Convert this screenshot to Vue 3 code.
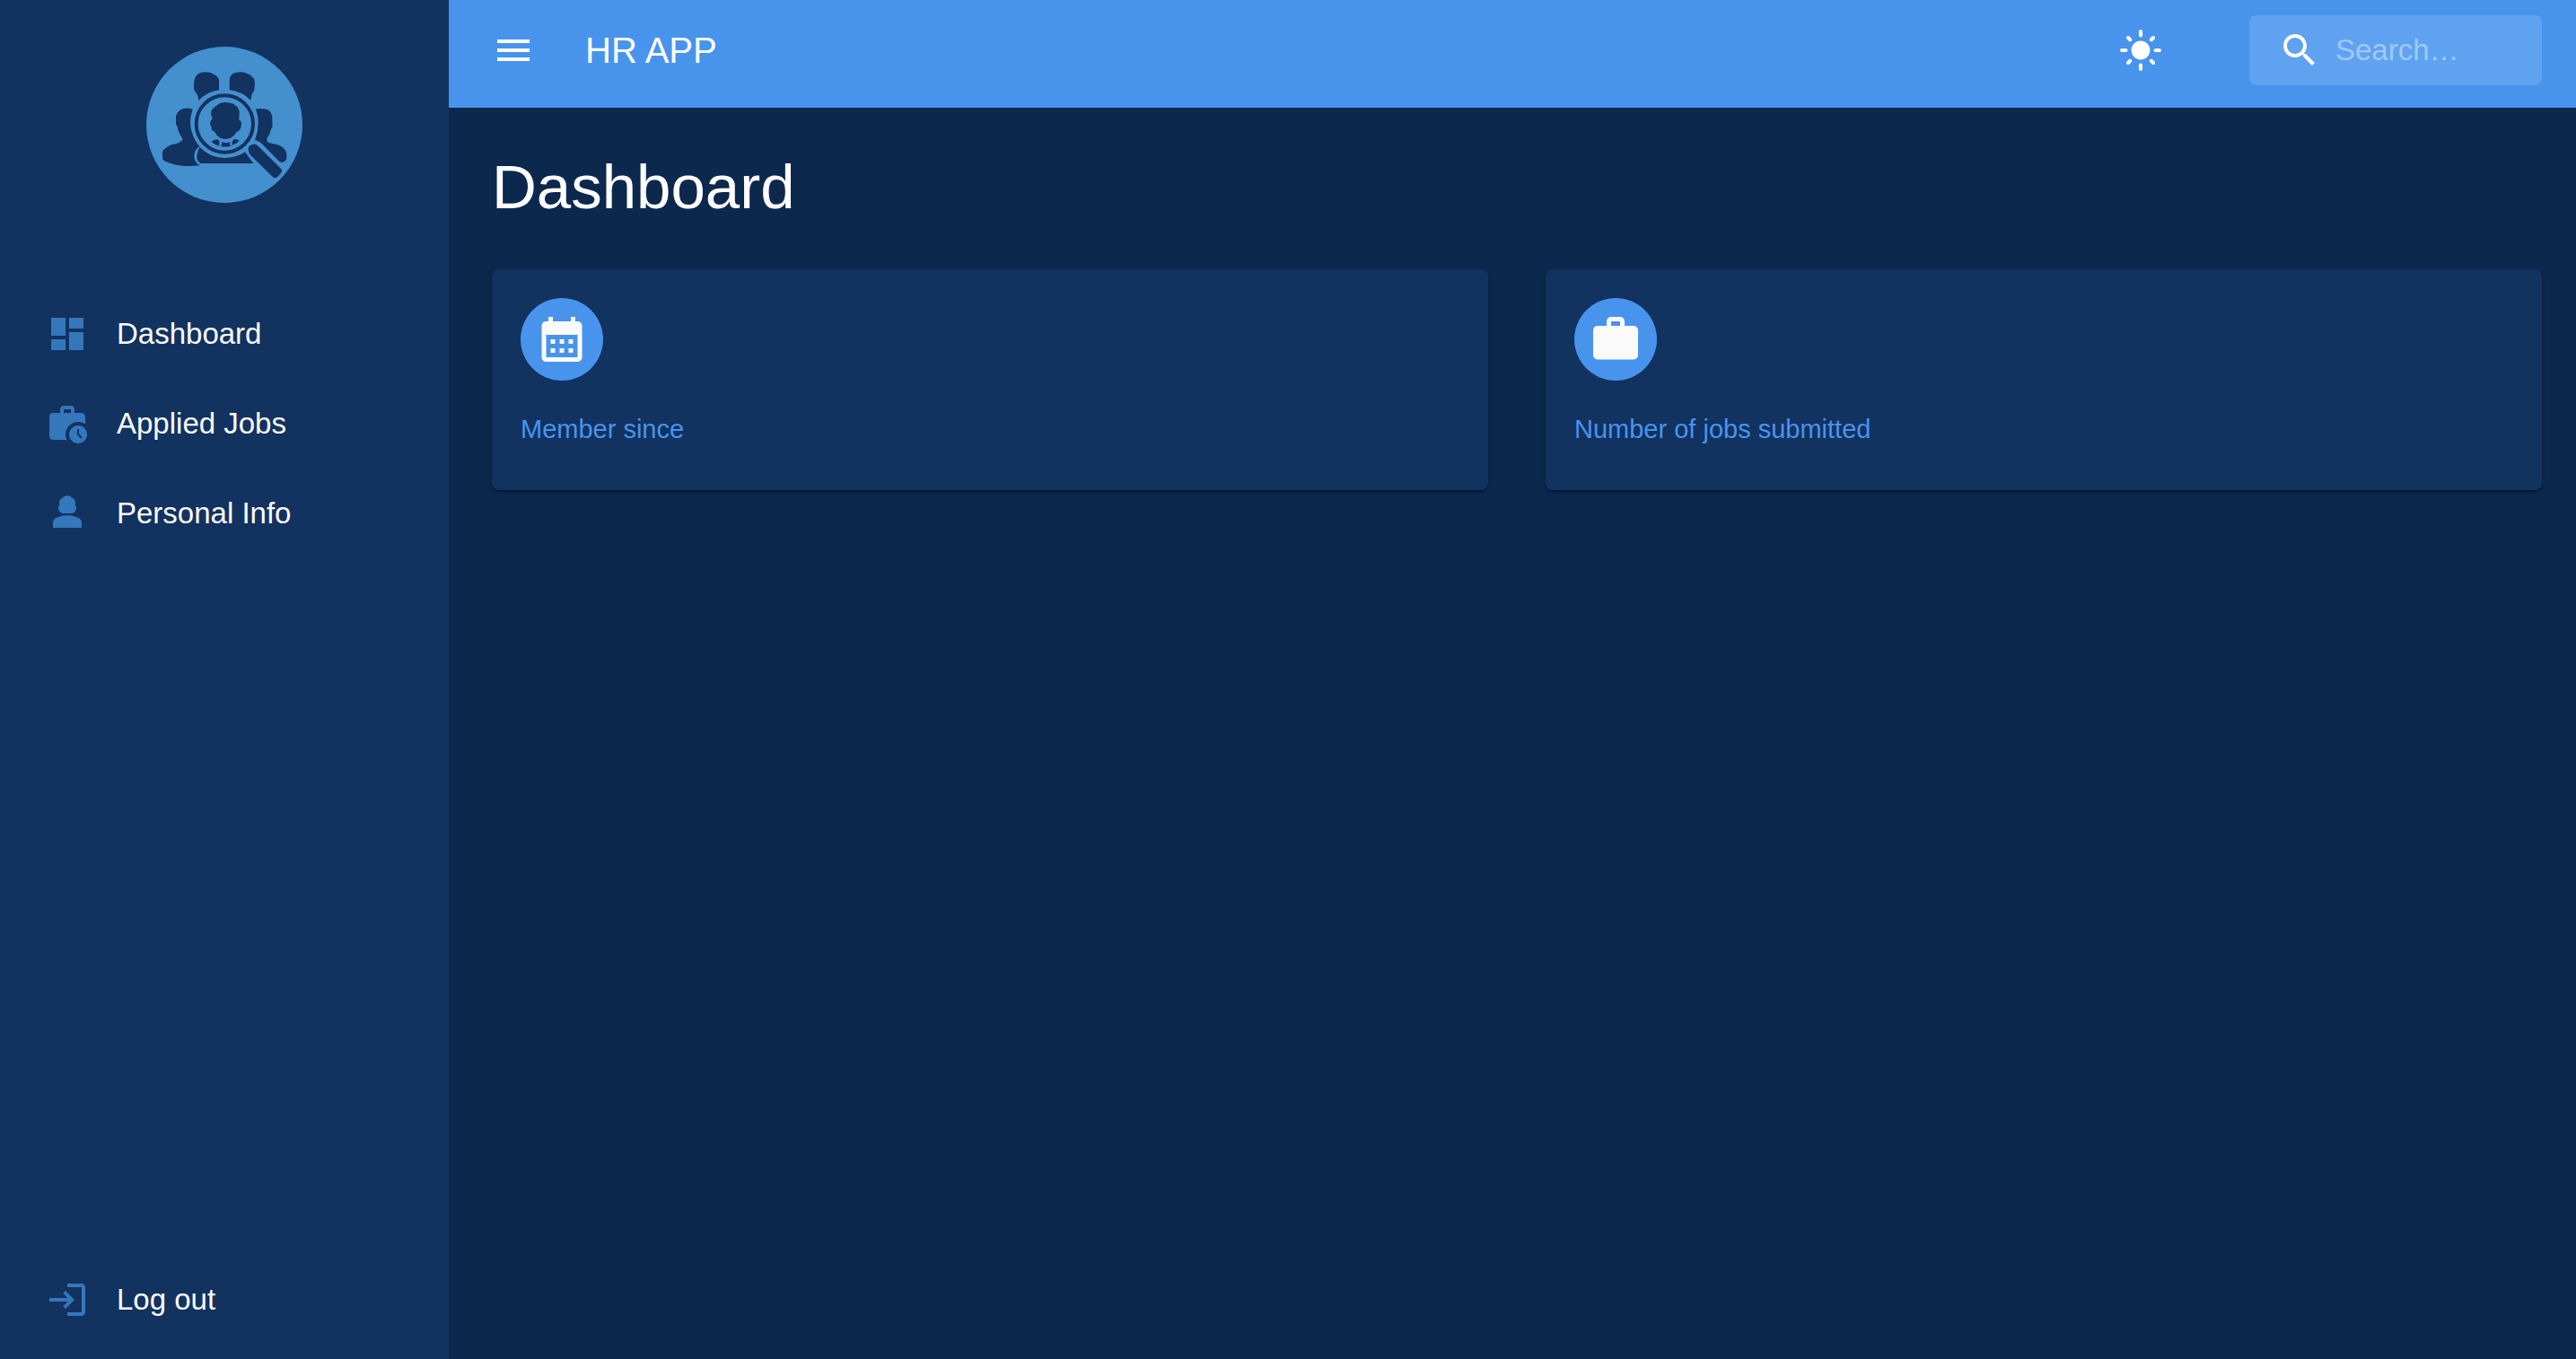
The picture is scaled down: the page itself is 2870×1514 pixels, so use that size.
<script setup>
import { ref } from 'vue'

const query = ref('')

const links = [
  {
    label: 'Dashboard',
    icon: 'M3 13h8V3H3v10zm0 8h8v-6H3v6zm10 0h8V11h-8v10zm0-18v6h8V3h-8z'
  },
  {
    label: 'Applied Jobs',
    icon: 'M18 11c1.49 0 2.87.47 4 1.26V8c0-1.11-.89-2-2-2h-4V4c0-1.11-.89-2-2-2h-4c-1.11 0-2 .89-2 2v2H4c-1.11 0-1.99.89-1.99 2L2 19c0 1.11.89 2 2 2h7.68A6.995 6.995 0 0 1 18 11zm-8-7h4v2h-4V4zM18 13c-2.76 0-5 2.24-5 5s2.24 5 5 5 5-2.24 5-5-2.24-5-5-5zm1.65 7.35L17.5 18.2V15h1v2.79l1.85 1.85-.7.71z'
  },
  {
    label: 'Personal Info',
    icon: 'M18.39 14.56C16.71 13.7 14.53 13 12 13s-4.71.7-6.39 1.56C4.61 15.07 4 16.1 4 17.22V20h16v-2.78c0-1.12-.61-2.15-1.61-2.66zM10 12h4c1.66 0 3-1.34 3-3 0-.73-.27-1.4-.71-1.92.13-.33.21-.7.21-1.08 0-1.25-.77-2.32-1.86-2.77C14 2.48 13.06 2 12 2s-2 .48-2.64 1.23C8.27 3.68 7.5 4.75 7.5 6c0 .38.08.75.21 1.08C7.27 7.6 7 8.27 7 9c0 1.66 1.34 3 3 3z'
  }
]

const cards = [
  {
    label: 'Member since',
    icon: 'M19 4h-1V2h-2v2H8V2H6v2H5c-1.11 0-1.99.9-1.99 2L3 20c0 1.1.89 2 2 2h14c1.1 0 2-.9 2-2V6c0-1.1-.9-2-2-2zm0 16H5V10h14v10zM9 14H7v-2h2v2zm4 0h-2v-2h2v2zm4 0h-2v-2h2v2zm-8 4H7v-2h2v2zm4 0h-2v-2h2v2zm4 0h-2v-2h2v2z'
  },
  {
    label: 'Number of jobs submitted',
    icon: 'M20 6h-4V4c0-1.11-.89-2-2-2h-4c-1.11 0-2 .89-2 2v2H4c-1.11 0-1.99.89-1.99 2L2 19c0 1.11.89 2 2 2h16c1.11 0 2-.89 2-2V8c0-1.11-.89-2-2-2zm-6 0h-4V4h4v2z'
  }
]
</script>

<template>
  <div class="app">
    <aside class="sidebar">
      <svg class="logo" viewBox="39 36 522 522" role="img" aria-label="HR">
        <circle class="logo-bg" cx="300" cy="297" r="261" />
        <g class="logo-fg">
          <path d="M214 216L211 200Q207 189 199 182L198 160Q200 139 207 132Q218 121 235 121Q254 121 263 128Q279 133 282 147V181Q240 187 214 216Z" />
          <path d="M317 181V147Q319 128 336 123Q358 118 374 125Q391 130 400 145L402 160L399 184Q392 190 390 203L388 215Q358 185 317 181Z" />
          <path d="M194 246Q179 287 192 324Q200 350 217 370Q199 380 199 404Q200 422 218 433Q160 440 118 425Q92 417 93 409V387Q102 372 124 363Q153 359 160 347Q160 339 153 332Q144 317 143 304L138 295V267Q145 249 162 243Q181 239 194 246Z" />
          <path d="M405 244Q418 242 430 244Q446 245 452 252Q461 263 460 278V292L461 302L456 312Q453 330 443 341Q439 351 448 357L465 361Q486 365 497 374Q508 384 508 394V409Q505 422 492 423Q486 422 480 416L425 360Q416 351 402 348Q423 294 405 244Z" />
          <path d="M218 372Q251 407 300 408Q343 407 369 388L397 426H222Q209 421 208 404Q210 382 218 372Z" />
          <path d="M285 225L300 222L313 223L330 227L343 237L350 251L349 279L357 289L356 303L351 316L341 321L333 332L319 342L303 345L287 342L276 334L268 321L258 315L256 302L252 294L253 285L258 280L260 272L255 263L257 248L267 238Z" />
          <path d="M256 354Q264 346 278 345L284 353Q281 361 284 368Q267 363 256 354ZM291 355Q305 359 320 355L317 361L321 369Q305 372 288 369L292 361ZM326 354L332 345Q345 346 350 350Q341 361 325 365Z" />
          <path d="M380 382Q377 368 393 363Q404 359 413 368L490 445Q495 451 489 458L477 472Q466 478 459 469L391 402Q381 393 380 382Z" />
        </g>
        <circle class="logo-lens" cx="301" cy="294" r="95" />
      </svg>

      <nav class="nav">
        <a v-for="link in links" :key="link.label" class="link" href="#">
          <svg class="icon" viewBox="0 0 24 24" aria-hidden="true"><path :d="link.icon" /></svg>
          <span>{{ link.label }}</span>
        </a>
      </nav>

      <button class="link logout" type="button">
        <svg class="icon" viewBox="0 0 24 24" aria-hidden="true">
          <path d="M11 7L9.600 8.400l2.600 2.600H2v2h10.200l-2.600 2.600L11 17l5-5-5-5zm9 12h-8v2h8c1.100 0 2-.9 2-2V5c0-1.100-.9-2-2-2h-8v2h8v14z" />
        </svg>
        <span>Log out</span>
      </button>
    </aside>

    <div class="page">
      <header class="topbar">
        <button class="icon-button" type="button" aria-label="Menu">
          <svg class="icon" viewBox="0 0 24 24"><path d="M3 18h18v-2H3v2zm0-5h18v-2H3v2zm0-7v2h18V6H3z" /></svg>
        </button>
        <span class="brand">HR APP</span>
        <button class="icon-button theme" type="button" aria-label="Light mode">
          <svg class="icon sun" viewBox="0 0 24 24">
            <path d="M12 7c-2.760 0-5 2.240-5 5s2.240 5 5 5 5-2.240 5-5-2.240-5-5-5zM2 13h2c.55 0 1-.45 1-1s-.45-1-1-1H2c-.55 0-1 .45-1 1s.45 1 1 1zm18 0h2c.55 0 1-.45 1-1s-.45-1-1-1h-2c-.55 0-1 .45-1 1s.45 1 1 1zM11 2v2c0 .55.45 1 1 1s1-.45 1-1V2c0-.55-.45-1-1-1s-1 .45-1 1zm0 18v2c0 .55.45 1 1 1s1-.45 1-1v-2c0-.55-.45-1-1-1s-1 .45-1 1zM5.990 4.580c-.39-.39-1.030-.39-1.410 0-.39.39-.39 1.030 0 1.410l1.060 1.060c.39.39 1.030.39 1.410 0s.39-1.030 0-1.410L5.990 4.580zm12.370 12.370c-.39-.39-1.030-.39-1.410 0-.39.39-.39 1.030 0 1.410l1.060 1.060c.39.39 1.030.39 1.410 0 .39-.39.39-1.030 0-1.410l-1.060-1.060zm1.060-10.960c.39-.39.39-1.030 0-1.410-.39-.39-1.030-.39-1.410 0l-1.060 1.060c-.39.39-.39 1.030 0 1.410s1.030.39 1.410 0l1.060-1.060zM7.050 18.360c.39-.39.39-1.030 0-1.410-.39-.39-1.030-.39-1.410 0l-1.060 1.060c-.39.39-.39 1.030 0 1.410s1.030.39 1.410 0l1.060-1.060z" />
          </svg>
        </button>
        <label class="search">
          <svg class="icon" viewBox="0 0 24 24" aria-hidden="true">
            <path d="M15.500 14h-.79l-.28-.27C15.410 12.590 16 11.110 16 9.500 16 5.910 13.090 3 9.500 3S3 5.910 3 9.500 5.910 16 9.500 16c1.610 0 3.090-.59 4.230-1.570l.27.28v.79l5 4.990L20.490 19l-4.990-5zm-6 0C7.010 14 5 11.990 5 9.500S7.010 5 9.500 5 14 7.010 14 9.500 11.990 14 9.500 14z" />
          </svg>
          <input v-model="query" class="search-input" type="text" placeholder="Search…" aria-label="Search" />
        </label>
      </header>

      <main class="content">
        <h1 class="title">Dashboard</h1>
        <div class="cards">
          <section v-for="card in cards" :key="card.label" class="card">
            <span class="avatar">
              <svg class="avatar-icon" viewBox="0 0 24 24" aria-hidden="true"><path :d="card.icon" /></svg>
            </span>
            <p class="card-label">{{ card.label }}</p>
          </section>
        </div>
      </main>
    </div>
  </div>
</template>

<style>
body {
  margin: 0;
  background: #0c284d;
}
</style>

<style scoped>
.app {
  display: flex;
  min-height: 100vh;
  background: #0c284d;
  color: #fff;
  font-family: "Liberation Sans", Arial, sans-serif;
}

.sidebar {
  display: flex;
  flex-direction: column;
  flex: none;
  box-sizing: border-box;
  width: 500px;
  padding: 52px 0 16px;
  background: #123260;
}

.logo {
  align-self: center;
  width: 174px;
  height: 174px;
}

.logo-bg {
  fill: #448fcd;
}

.logo-fg {
  fill: #123260;
}

.logo-lens {
  fill: none;
  stroke: #123260;
  stroke-width: 12px;
}

.nav {
  display: flex;
  flex-direction: column;
  margin-top: 96px;
}

.link {
  display: flex;
  align-items: center;
  gap: 31px;
  height: 100px;
  padding: 0 51px;
  border: 0;
  background: none;
  color: #fafafa;
  font-family: inherit;
  font-size: 33px;
  line-height: 48px;
  text-decoration: none;
}

.link .icon {
  fill: #3577bb;
}

.logout {
  margin-top: auto;
}

.icon {
  flex: none;
  width: 48px;
  height: 48px;
  fill: #fff;
}

.page {
  flex: 1;
  min-width: 0;
}

.topbar {
  display: flex;
  align-items: center;
  box-sizing: border-box;
  height: 120px;
  padding: 0 38px 8px 48px;
  background: #4894ed;
}

.icon-button {
  display: flex;
  padding: 0;
  border: 0;
  background: none;
}

.brand {
  margin-left: 56px;
  font-size: 40px;
  line-height: 64px;
}

.theme {
  margin-left: auto;
}

.sun {
  width: 50px;
  height: 50px;
}

.search {
  display: flex;
  align-items: center;
  gap: 16px;
  box-sizing: border-box;
  width: 326px;
  height: 78px;
  margin-left: 96px;
  padding: 0 32px;
  border-radius: 8px;
  background: #5fa2f0;
}

.search-input {
  flex: 1;
  min-width: 0;
  padding: 0;
  border: 0;
  outline: 0;
  background: none;
  color: #fff;
  font-family: inherit;
  font-size: 33px;
  line-height: 48px;
}

.search-input::placeholder {
  color: #a0c8f6;
  opacity: 1;
}

.content {
  padding: 48px 38px 48px 48px;
}

.title {
  margin: 0;
  font-size: 69px;
  font-weight: 400;
  line-height: 82px;
}

.cards {
  display: grid;
  grid-template-columns: 1fr 1fr;
  gap: 64px;
  margin-top: 50px;
}

.card {
  padding: 32px;
  border-radius: 8px;
  background: #123260;
  box-shadow: 0 4px 2px -2px rgba(0, 0, 0, 0.2), 0 2px 2px rgba(0, 0, 0, 0.14), 0 2px 6px rgba(0, 0, 0, 0.12);
}

.avatar {
  display: flex;
  align-items: center;
  justify-content: center;
  width: 92px;
  height: 92px;
  border-radius: 50%;
  background: #4894ed;
}

.avatar-icon {
  width: 60px;
  height: 60px;
  fill: #fafafa;
}

.card-label {
  margin: 30px 0 12px;
  color: #4894ed;
  font-size: 29px;
  line-height: 48px;
}
</style>
